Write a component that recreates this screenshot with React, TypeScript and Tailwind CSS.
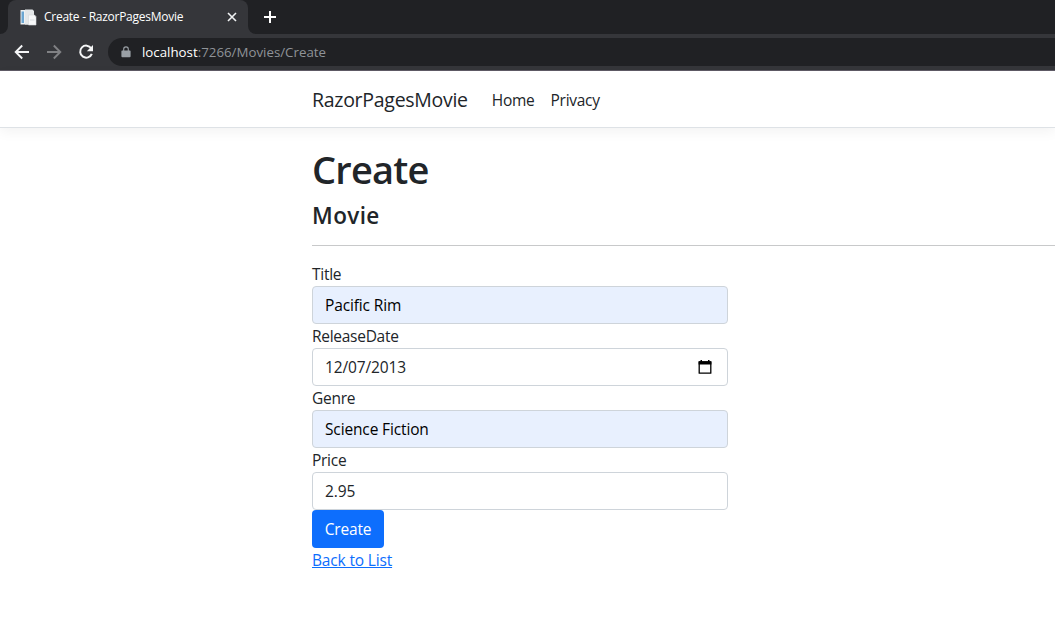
import React from "react";

function Favicon() {
  return (
    <svg width="17" height="17" viewBox="0 0 17 17" className="shrink-0">
      <path d="M0.5 1h9v14.500h-9z" fill="#eef1f3" />
      <path d="M1.500 2.500h2.500v11.500H1.500z" fill="#6ba6d2" />
      <path d="M5 0.500h7.500l1.500 1.500v13.500H5z" fill="#e4e7e9" />
      <path d="M8.500 6h6l1.500 1.500v8.500H8.500z" fill="#f7f8f9" stroke="#d3d7da" strokeWidth="0.6" />
      <path d="M10 11h4.500" stroke="#cfd4d9" strokeWidth="0.8" />
    </svg>
  );
}

function BrowserChrome() {
  return (
    <div className="h-[71px] border-b border-[#5f5b66] bg-[#35363a]">
      <div className="flex h-[34px] bg-[#202124]">
        <div className="w-2 bg-[#35363a]">
          <div className="h-full rounded-br-lg bg-[#202124]" />
        </div>
        <div className="flex w-60 items-center rounded-t-lg bg-[#35363a] pl-3 pr-[11px]">
          <Favicon />
          <span className="ml-[7px] whitespace-nowrap text-[12px] leading-4 tracking-[-0.26px] text-white">
            Create - RazorPagesMovie
          </span>
          <svg width="10" height="10" viewBox="0 0 10 10" className="ml-auto shrink-0">
            <path d="M1 1l8 8M9 1l-8 8" stroke="#f1f3f4" strokeWidth="1.6" />
          </svg>
        </div>
        <div className="w-2 bg-[#35363a]">
          <div className="h-full rounded-bl-lg bg-[#202124]" />
        </div>
        <svg width="12" height="12" viewBox="0 0 12 12" className="ml-2 mt-[11px]">
          <path d="M6 0v12M0 6h12" stroke="#fff" strokeWidth="2" />
        </svg>
      </div>
      <div className="flex h-9 items-center pl-[14px]">
        <svg width="16" height="16" viewBox="0 0 16 16" fill="none" stroke="#f5f6f7" strokeWidth="1.900">
          <path d="M15 8H2M8.200 1.500L1.700 8l6.500 6.500" />
        </svg>
        <svg width="16" height="16" viewBox="0 0 16 16" fill="none" stroke="#808184" strokeWidth="1.900" className="ml-4">
          <path d="M1 8h13M7.800 1.500L14.300 8l-6.500 6.500" />
        </svg>
        <svg width="16" height="16" viewBox="0 0 16 16" fill="none" className="ml-4">
          <path d="M13.200 4.300A6 6 0 1 0 13.800 9.800" stroke="#f5f6f7" strokeWidth="2" />
          <path d="M15 1v6.200H8.800z" fill="#f5f6f7" />
        </svg>
        <div className="ml-[14px] flex h-7 flex-1 items-center rounded-l-full bg-[#202124] pl-[13px]">
          <svg width="10" height="12" viewBox="0 0 10 12">
            <path d="M1.200 4.500h7.600a.8.8 0 0 1 .8.8v5a1 1 0 0 1-1 1H1.400a1 1 0 0 1-1-1v-5a.8.8 0 0 1 .8-.8z" fill="#9aa0a6" />
            <path d="M2.700 5V3.200a2.300 2.300 0 0 1 4.600 0V5" fill="none" stroke="#9aa0a6" strokeWidth="1.100" />
          </svg>
          <span className="ml-[11px] whitespace-nowrap text-[13.3px] leading-5 text-[#8f9398]">
            <span className="text-white">localhost</span>:7266/Movies/Create
          </span>
        </div>
      </div>
    </div>
  );
}

function CalendarIcon() {
  return (
    <svg width="14" height="15" viewBox="0 0 14 15" className="mr-[3px]">
      <path d="M2.500 0H4v2H2.500zM10 0h1.500v2H10z" fill="#000" />
      <path d="M1.200 2h11.600v11.200H1.200z" fill="none" stroke="#000" strokeWidth="1.300" strokeLinejoin="round" />
      <path d="M0.600 1.300h12.800v3.200H0.600z" fill="#000" />
    </svg>
  );
}

function Field({ label, value, filled, date }: { label: string; value: string; filled?: boolean; date?: boolean }) {
  return (
    <div>
      <div className="h-6 leading-6 tracking-[-0.28px] text-[#212529]">{label}</div>
      <div
        className={
          "flex h-[38px] items-center justify-between rounded border border-[#ced4da] px-3 " +
          (filled ? "bg-[#e8f0fe] text-black" : "bg-white text-[#212529]")
        }
      >
        <span className="leading-6 tracking-[-0.14px]">{value}</span>
        {date && <CalendarIcon />}
      </div>
    </div>
  );
}

export default function App() {
  return (
    <div className="h-[632px] w-[1055px] overflow-hidden bg-white font-['Open_Sans','Noto_Sans',sans-serif] text-[#212529]">
      <BrowserChrome />
      <nav className="flex h-[57px] items-center border-b border-[#dee2e6] pl-[312px] text-[15.5px] tracking-[-0.27px] text-[#212529] shadow-[0_4px_12px_rgba(0,0,0,0.05)]">
        <span className="pt-px text-[19.5px] leading-[30px] tracking-[-0.28px]">RazorPagesMovie</span>
        <span className="ml-6 pt-px leading-6">Home</span>
        <span className="ml-4 pt-px leading-6">Privacy</span>
      </nav>
      <main className="pl-[312px] pt-4 text-[15.5px] tracking-[-0.2px]">
        <h1 className="h-14 pt-px text-[38px] font-semibold leading-[48px] tracking-[-0.8px]">Create</h1>
        <h4 className="h-[29px] pt-px text-[22.5px] font-semibold leading-[30px] tracking-[0.4px]">Movie</h4>
        <hr className="mb-4 mt-4 border-t border-[#c8c9ca]" />
        <div className="w-[416px]">
          <Field label="Title" value="Pacific Rim" filled />
          <Field label="ReleaseDate" value="12/07/2013" date />
          <Field label="Genre" value="Science Fiction" filled />
          <Field label="Price" value="2.95" />
          <button className="flex h-[38px] w-[72px] items-center justify-center rounded bg-[#0d6efd] pt-0.5 text-white">
            Create
          </button>
          <a className="block w-fit leading-6 tracking-[-0.16px] text-[#0d6efd] underline">Back to List</a>
        </div>
      </main>
    </div>
  );
}
